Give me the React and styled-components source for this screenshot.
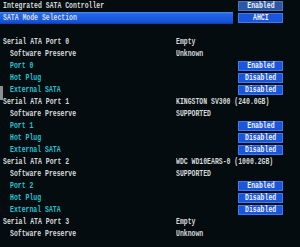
import React from 'react';
import styled, { createGlobalStyle } from 'styled-components';

const GlobalStyle = createGlobalStyle`
  html, body {
    margin: 0;
    padding: 0;
    background: #050c0f;
  }
`;

const rows = [
  { label: 'Integrated SATA Controller', kind: 'head', button: 'Enabled', muted: true },
  { label: 'SATA Mode Selection', kind: 'head', button: 'AHCI', selected: true },
  { blank: true },
  { label: 'Serial ATA Port 0', kind: 'head', value: 'Empty' },
  { label: 'Software Preserve', kind: 'sub', value: 'Unknown' },
  { label: 'Port 0', kind: 'opt', button: 'Enabled' },
  { label: 'Hot Plug', kind: 'opt', button: 'Disabled' },
  { label: 'External SATA', kind: 'opt', button: 'Disabled' },
  { label: 'Serial ATA Port 1', kind: 'head', value: 'KINGSTON SV300 (240.0GB)' },
  { label: 'Software Preserve', kind: 'sub', value: 'SUPPORTED' },
  { label: 'Port 1', kind: 'opt', button: 'Enabled' },
  { label: 'Hot Plug', kind: 'opt', button: 'Disabled' },
  { label: 'External SATA', kind: 'opt', button: 'Disabled' },
  { label: 'Serial ATA Port 2', kind: 'head', value: 'WDC WD10EARS-0 (1000.2GB)' },
  { label: 'Software Preserve', kind: 'sub', value: 'SUPPORTED' },
  { label: 'Port 2', kind: 'opt', button: 'Enabled' },
  { label: 'Hot Plug', kind: 'opt', button: 'Disabled' },
  { label: 'External SATA', kind: 'opt', button: 'Disabled' },
  { label: 'Serial ATA Port 3', kind: 'head', value: 'Empty' },
  { label: 'Software Preserve', kind: 'sub', value: 'Unknown' },
];

function App() {
  return (
    <Screen>
      <GlobalStyle />
      <ScrollThumb />
      {rows.map((r, i) => (
        <Row key={i}>
          <Main $selected={r.selected}>
            <Label $kind={r.kind}>
              <Txt>{r.label}</Txt>
            </Label>
            <Value>
              <Txt>{r.value}</Txt>
            </Value>
          </Main>
          {r.button && (
            <Button $muted={r.muted}>
              <Txt>{r.button}</Txt>
            </Button>
          )}
        </Row>
      ))}
    </Screen>
  );
}

const Screen = styled.div`
  position: relative;
  width: 300px;
  height: 247px;
  overflow: hidden;
  background: #050c0f;
  font-family: "Liberation Mono", "DejaVu Sans Mono", monospace;
  font-size: 9px;
  font-weight: bold;
`;

const ScrollThumb = styled.div`
  position: absolute;
  left: 0;
  top: 86px;
  width: 3px;
  height: 14px;
  background: #8a8f90;
`;

const Row = styled.div`
  display: flex;
  align-items: stretch;
  height: 12px;
`;

const Main = styled.div`
  width: 233px;
  display: grid;
  grid-template-columns: 176px 57px;
  box-sizing: border-box;
  background: ${p => (p.$selected ? 'linear-gradient(#4a8cf4 0, #2266e8 2px, #1552d6 10px, #0b3ca8 12px)' : 'transparent')};
`;

const Label = styled.div`
  padding-left: ${p => (p.$kind === 'head' ? '3px' : '10px')};
  color: ${p => (p.$kind === 'opt' ? '#1fc4d6' : '#d6dadb')};
  line-height: 12px;
  white-space: nowrap;
`;

const Value = styled.div`
  color: #d6dadb;
  line-height: 12px;
  white-space: nowrap;
`;

const Txt = styled.span`
  display: inline-block;
  transform: scaleX(0.72);
  transform-origin: left center;
  white-space: pre;
`;

const Button = styled.div`
  margin-left: 5px;
  margin-top: 1px;
  width: 45px;
  height: 10px;
  box-sizing: border-box;
  border: 1px solid ${p => (p.$muted ? '#4c74b8' : '#3c7cf0')};
  background: ${p => (p.$muted ? '#2a58a8' : '#1a56dc')};
  color: #f2f4f8;
  line-height: 8px;
  display: flex;
  justify-content: center;

  span {
    transform-origin: center center;
  }
`;

export default App;
